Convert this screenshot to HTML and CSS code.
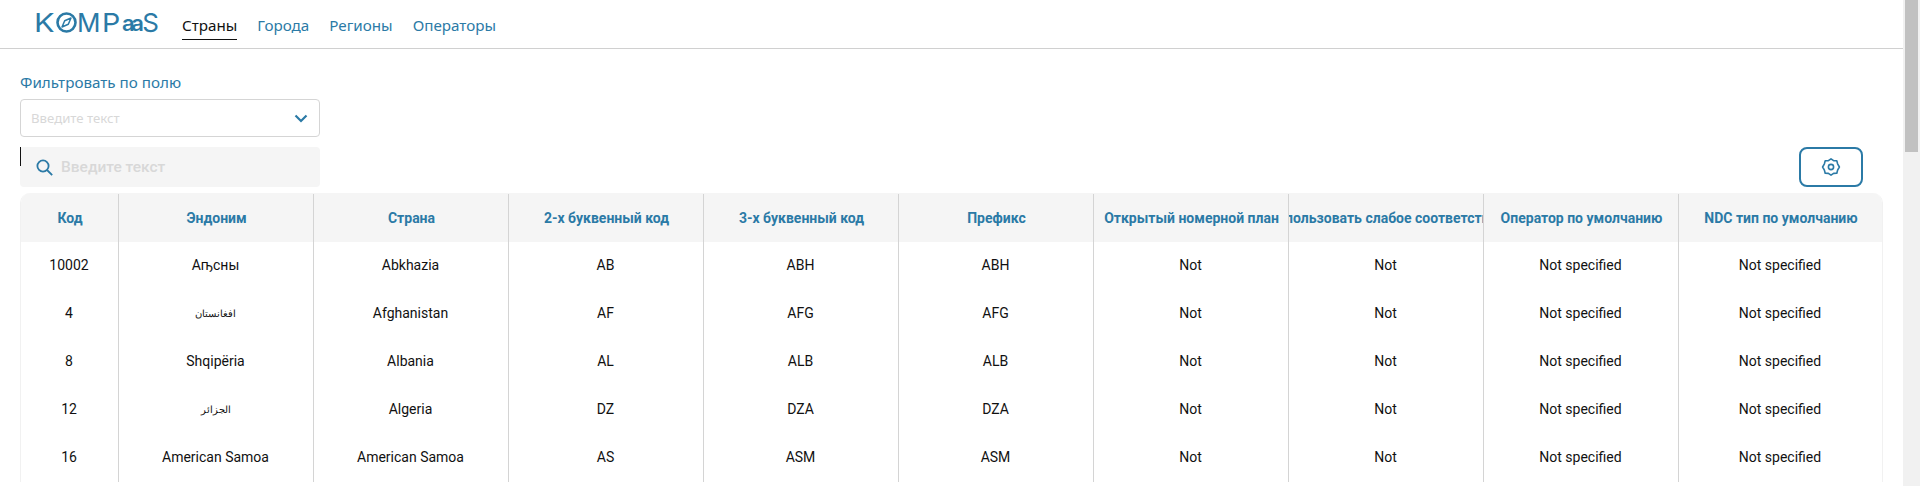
FILE: index.html
```html
<!DOCTYPE html>
<html lang="ru">
<head>
<meta charset="utf-8">
<title>Kompaas</title>
<link rel="stylesheet" href="styles.css">
</head>
<body>
<div class="app">
  <main class="main">
    <header class="topbar">
      <div class="logo"><span class="k">K</span><svg class="compass" width="21" height="21" viewBox="0 0 21 21"><circle cx="10.5" cy="10.5" r="9" fill="none" stroke="#2b7aa6" stroke-width="2.6"/><path d="M15 6 12.3 12.3 6 15 8.7 8.7Z" fill="none" stroke="#2b7aa6" stroke-width="1.5" stroke-linejoin="round"/></svg><span class="mp">M</span><span class="p">P</span><span class="aa">aa</span><span class="s">S</span></div>
      <nav class="tabs">
        <a class="tab active">Страны</a>
        <a class="tab">Города</a>
        <a class="tab">Регионы</a>
        <a class="tab">Операторы</a>
      </nav>
    </header>
    <section class="filters">
      <label class="field-label">Фильтровать по полю</label>
      <div class="select"><span>Введите текст</span><svg width="14" height="9" viewBox="0 0 14 9"><path d="M1.5 1.5 7 7l5.5-5.5" fill="none" stroke="#2b7aa6" stroke-width="2.2"/></svg></div>
      <div class="tools">
        <div class="search">
          <i class="caret"></i>
          <svg width="17" height="17" viewBox="0 0 17 17"><circle cx="7" cy="7" r="5.6" fill="none" stroke="#2b7aa6" stroke-width="1.8"/><path d="m11 11 5.2 5.2" stroke="#2b7aa6" stroke-width="1.8"/></svg>
          <span>Введите текст</span>
        </div>
        <button class="settings"><svg width="20" height="20" viewBox="0 0 20 20"><path d="M10 1.8 12.6 3.6 15.8 3.7 16.6 6.8 18.4 10 16.6 13.2 15.8 16.3 12.6 16.4 10 18.2 7.4 16.4 4.2 16.3 3.4 13.2 1.6 10 3.4 6.8 4.2 3.7 7.4 3.6Z" fill="none" stroke="#2b7aa6" stroke-width="1.6" stroke-linejoin="round"/><circle cx="10" cy="10" r="2.6" fill="none" stroke="#2b7aa6" stroke-width="1.6"/></svg></button>
      </div>
    </section>
    <div class="table">
      <div class="row head">
        <div class="cell">Код</div><div class="cell">Эндоним</div><div class="cell">Страна</div><div class="cell">2-х буквенный код</div><div class="cell">3-х буквенный код</div><div class="cell">Префикс</div><div class="cell">Открытый номерной план</div><div class="cell">Использовать слабое соответствие</div><div class="cell">Оператор по умолчанию</div><div class="cell">NDC тип по умолчанию</div>
      </div>
      <div class="row">
        <div class="cell">10002</div><div class="cell">Аҧсны</div><div class="cell">Abkhazia</div><div class="cell">AB</div><div class="cell">ABH</div><div class="cell">ABH</div><div class="cell">Not</div><div class="cell">Not</div><div class="cell">Not specified</div><div class="cell">Not specified</div>
      </div>
      <div class="row">
        <div class="cell">4</div><div class="cell arabic">افغانستان</div><div class="cell">Afghanistan</div><div class="cell">AF</div><div class="cell">AFG</div><div class="cell">AFG</div><div class="cell">Not</div><div class="cell">Not</div><div class="cell">Not specified</div><div class="cell">Not specified</div>
      </div>
      <div class="row">
        <div class="cell">8</div><div class="cell">Shqipëria</div><div class="cell">Albania</div><div class="cell">AL</div><div class="cell">ALB</div><div class="cell">ALB</div><div class="cell">Not</div><div class="cell">Not</div><div class="cell">Not specified</div><div class="cell">Not specified</div>
      </div>
      <div class="row">
        <div class="cell">12</div><div class="cell arabic">الجزائر</div><div class="cell">Algeria</div><div class="cell">DZ</div><div class="cell">DZA</div><div class="cell">DZA</div><div class="cell">Not</div><div class="cell">Not</div><div class="cell">Not specified</div><div class="cell">Not specified</div>
      </div>
      <div class="row">
        <div class="cell">16</div><div class="cell">American Samoa</div><div class="cell">American Samoa</div><div class="cell">AS</div><div class="cell">ASM</div><div class="cell">ASM</div><div class="cell">Not</div><div class="cell">Not</div><div class="cell">Not specified</div><div class="cell">Not specified</div>
      </div>
    </div>
  </main>
  <aside class="scrollbar"><div class="thumb"></div></aside>
</div>
</body>
</html>
```
FILE: styles.css
```css
* { box-sizing: border-box; }
html, body { margin: 0; height: 100%; overflow: hidden; background: #fff; }
body { font-family: Roboto, "Liberation Sans", sans-serif; color: #111; }
.app { display: flex; height: 486px; overflow: hidden; }
.main { flex: 1; min-width: 0; }
.scrollbar { width: 17px; background: #f1f1f1; padding: 0 2px; }
.thumb { height: 152px; background: #c1c1c1; }

.topbar { height: 49px; border-bottom: 1px solid #d0d0d0; display: flex; padding-left: 34px; }
.logo { width: 126px; height: 48px; padding-top: 9px; display: flex; align-items: flex-start; font-family: Inter, sans-serif; font-size: 26px; line-height: 28px; color: #2b7aa6; flex: none; }
.k { width: 22px; transform: scaleX(1.18); transform-origin: left center; }
.compass { margin-top: 3px; flex: none; }
.mp { width: 25px; }
.p { width: 20px; transform: scaleX(1.1); transform-origin: left center; }
.aa { font-size: 22px; font-weight: 600; letter-spacing: -3.5px; margin-right: 2px; }
.tabs { display: flex; gap: 20px; margin-left: 22px; font-family: "Noto Sans", sans-serif; font-size: 15.2px; }
.tab { height: 40px; line-height: 34px; padding-top: 8px; color: #2b7aa6; }
.tab.active { color: #111; border-bottom: 1px solid #111; }

.filters { padding: 24px 40px 0 20px; }
.field-label { display: block; font-family: "Noto Sans", sans-serif; font-size: 15.2px; line-height: 18px; color: #2b7aa6; }
.select { width: 300px; height: 38px; margin-top: 8px; border: 1px solid #d5d5d5; border-radius: 4px; padding: 0 11px 0 10px; display: flex; align-items: center; justify-content: space-between; font-family: "Noto Sans", sans-serif; font-size: 13.2px; color: #d8d8d8; }
.tools { display: flex; justify-content: space-between; margin-top: 10px; height: 40px; }
.search { position: relative; width: 300px; height: 40px; border-radius: 4px; background: #f5f5f5; display: flex; align-items: center; gap: 8px; padding-left: 16px; font-size: 15.5px; color: #d8d8d8; font-weight: 500; }
.caret { position: absolute; left: 0; top: 0; width: 1px; height: 19px; background: #111; }
.settings { width: 64px; height: 40px; background: #fff; border: 2px solid #2b7aa6; border-radius: 8px; padding: 0; margin: 0; display: flex; align-items: center; justify-content: center; }

.table { margin: 6px 20px 0 20px; border-left: 1px solid #f1f1f1; border-right: 1px solid #f1f1f1; border-radius: 10px 10px 0 0; overflow: hidden; }
.row { display: grid; grid-template-columns: 98px repeat(8, 195px) 1fr; height: 48px; font-size: 14px; }
.cell { display: flex; align-items: center; justify-content: center; white-space: nowrap; overflow: hidden; border-right: 1px solid #d4d4d4; padding: 0 1px 2px 0; }
.cell:last-child { border-right: 0; }
.head { height: 49px; background: #f5f5f5; font-weight: 700; font-size: 14px; color: #2b7aa6; }
.head .cell { padding: 0 0 1px 1px; margin-top: 1px; }
.arabic { font-size: 10px; }
```
